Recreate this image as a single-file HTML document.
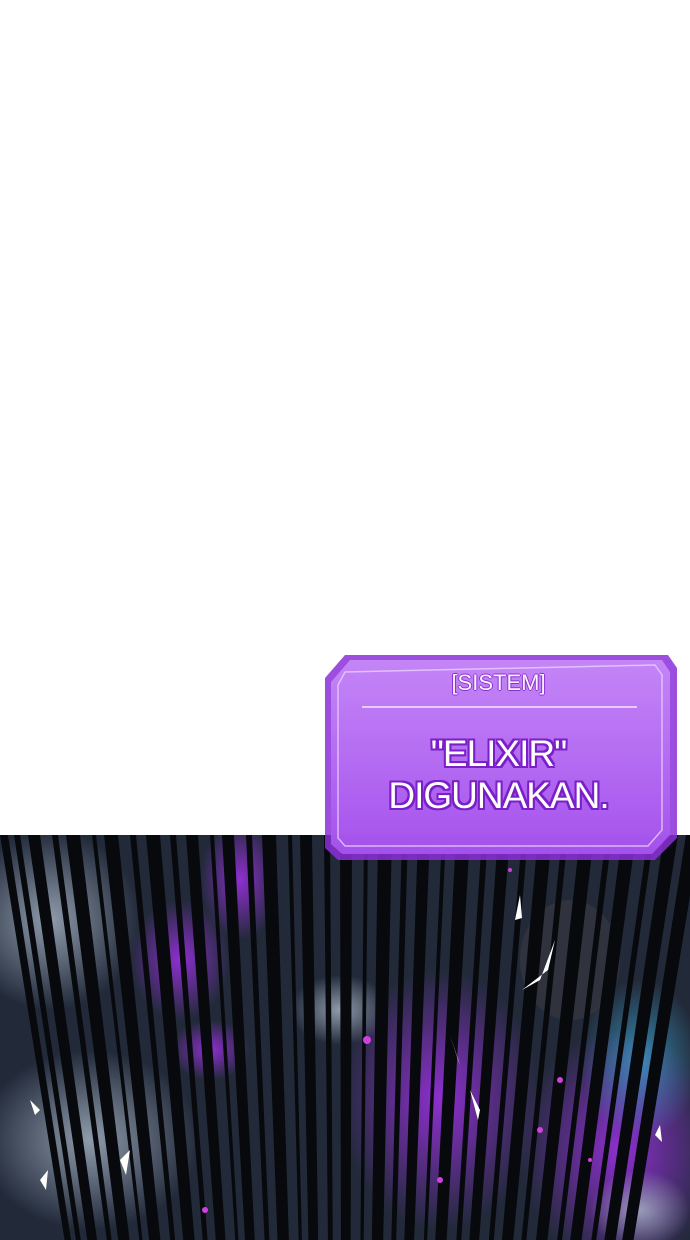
<!DOCTYPE html>
<html><head><meta charset="utf-8"><style>
html,body{margin:0;padding:0;overflow:hidden;}
body{width:690px;height:1240px;position:relative;overflow:hidden;background:#fff;font-family:"Liberation Sans",sans-serif;}
svg{display:block;}
#art{position:absolute;left:0;top:835px;width:690px;height:405px;}
.t{position:absolute;left:326px;width:345px;text-align:center;color:#fff;font-family:"Liberation Sans",sans-serif;}
</style></head><body>
<svg id="art" width="690" height="405" viewBox="0 835 690 405">
<defs>
<radialGradient id="p1" cx="0.5" cy="0.5" r="0.5"><stop offset="0" stop-color="#9a30e0" stop-opacity="0.9"/><stop offset="1" stop-color="#9a30e0" stop-opacity="0"/></radialGradient>
<radialGradient id="g1" cx="0.5" cy="0.5" r="0.5"><stop offset="0" stop-color="#aab8c8" stop-opacity="0.8"/><stop offset="1" stop-color="#aab8c8" stop-opacity="0"/></radialGradient>
<radialGradient id="b1" cx="0.5" cy="0.5" r="0.5"><stop offset="0" stop-color="#40b0e0" stop-opacity="0.7"/><stop offset="1" stop-color="#40b0e0" stop-opacity="0"/></radialGradient>
</defs>
<rect x="0" y="835" width="690" height="405" fill="#222a3a"/>
<ellipse cx="50" cy="920" rx="90" ry="90" fill="url(#g1)"/>
<ellipse cx="90" cy="1140" rx="110" ry="90" fill="url(#g1)"/>
<ellipse cx="180" cy="960" rx="50" ry="60" fill="url(#p1)"/>
<ellipse cx="210" cy="1050" rx="40" ry="30" fill="url(#p1)"/>
<ellipse cx="440" cy="1100" rx="100" ry="130" fill="url(#p1)"/>
<ellipse cx="620" cy="1150" rx="100" ry="120" fill="url(#p1)"/>
<ellipse cx="640" cy="1060" rx="60" ry="80" fill="url(#b1)"/>
<ellipse cx="240" cy="880" rx="40" ry="60" fill="url(#p1)"/>
<ellipse cx="340" cy="1010" rx="50" ry="35" fill="url(#g1)"/>
<ellipse cx="640" cy="1210" rx="50" ry="40" fill="url(#g1)"/>
<ellipse cx="570" cy="960" rx="50" ry="60" fill="#3a3a40" opacity="0.6"/>
<g fill="#07090d">
<polygon points="0,835 8,835 345,3000"/><polygon points="14,835 20,835 345,3000"/>
<polygon points="28,835 40,835 345,3000"/><polygon points="52,835 58,835 345,3000"/>
<polygon points="66,835 80,835 345,3000"/><polygon points="92,835 96,835 345,3000"/>
<polygon points="104,835 118,835 345,3000"/><polygon points="130,835 136,835 345,3000"/>
<polygon points="146,835 160,835 345,3000"/><polygon points="170,835 176,835 345,3000"/>
<polygon points="186,835 198,835 345,3000"/><polygon points="210,835 214,835 345,3000"/>
<polygon points="222,835 234,835 345,3000"/><polygon points="246,835 252,835 345,3000"/>
<polygon points="262,835 276,835 345,3000"/><polygon points="288,835 292,835 345,3000"/>
<polygon points="300,835 312,835 345,3000"/><polygon points="324,835 330,835 345,3000"/>
<polygon points="340,835 352,835 345,3000"/><polygon points="364,835 368,835 345,3000"/>
<polygon points="378,835 392,835 345,3000"/><polygon points="402,835 408,835 345,3000"/>
<polygon points="418,835 430,835 345,3000"/><polygon points="442,835 446,835 345,3000"/>
<polygon points="456,835 470,835 345,3000"/><polygon points="482,835 488,835 345,3000"/>
<polygon points="498,835 510,835 345,3000"/><polygon points="522,835 528,835 345,3000"/>
<polygon points="538,835 552,835 345,3000"/><polygon points="562,835 568,835 345,3000"/>
<polygon points="580,835 594,835 345,3000"/><polygon points="606,835 612,835 345,3000"/>
<polygon points="622,835 636,835 345,3000"/><polygon points="648,835 654,835 345,3000"/>
<polygon points="664,835 678,835 345,3000"/><polygon points="686,835 700,835 345,3000"/>
</g>
<g fill="#fff">
<polygon points="515,920 520,895 522,918"/><polygon points="540,980 555,940 548,970 522,990"/>
<polygon points="450,1035 458,1060 460,1065"/><polygon points="470,1090 480,1110 478,1120"/>
<polygon points="40,1180 48,1170 46,1190"/><polygon points="120,1160 130,1150 126,1175"/>
<polygon points="30,1100 40,1110 35,1115"/><polygon points="655,1135 660,1125 662,1142"/>
</g>
<g fill="#d040e0">
<circle cx="367" cy="1040" r="4"/><circle cx="560" cy="1080" r="3"/><circle cx="540" cy="1130" r="3"/><circle cx="590" cy="1160" r="2"/><circle cx="510" cy="870" r="2"/><circle cx="440" cy="1180" r="3"/><circle cx="205" cy="1210" r="3"/>
</g>
</svg>
<svg style="position:absolute;left:322px;top:652px" width="360" height="210" viewBox="322 652 360 210">
<defs><linearGradient id="bx" x1="0" y1="0" x2="0" y2="1"><stop offset="0" stop-color="#c688f8"/><stop offset="1" stop-color="#a653ee"/></linearGradient></defs>
<polygon points="345,655 668,655 677,668 677,838 655,860 338,860 325,848 325,678" fill="#8b2fd8" opacity="0.85"/>
<polygon points="350,660 662,660 670,672 670,835 652,854 342,854 331,844 331,682" fill="url(#bx)" opacity="0.95"/>
<polygon points="345,672 655,665 662,675 662,830 648,846 345,846 338,838 338,685" fill="none" stroke="#e8d0ff" stroke-width="1.5" opacity="0.8"/>
<line x1="362" y1="707" x2="637" y2="707" stroke="#f4e8ff" stroke-width="1.5"/>
</svg>
<div class="t" style="top:670px;font-size:22px;color:#fbf3ff;text-shadow:1px 0 #8a2fd0,-1px 0 #8a2fd0,0 1px #8a2fd0,0 -1px #8a2fd0;">[SISTEM]</div>
<div class="t" style="top:733px;font-size:37px;line-height:42px;letter-spacing:-1px;text-shadow:2px 0 #7b1fc8,-2px 0 #7b1fc8,0 2px #7b1fc8,0 -2px #7b1fc8,2px 2px #7b1fc8,-2px -2px #7b1fc8,2px -2px #7b1fc8,-2px 2px #7b1fc8;">"ELIXIR"<br>DIGUNAKAN.</div>
</body></html>
